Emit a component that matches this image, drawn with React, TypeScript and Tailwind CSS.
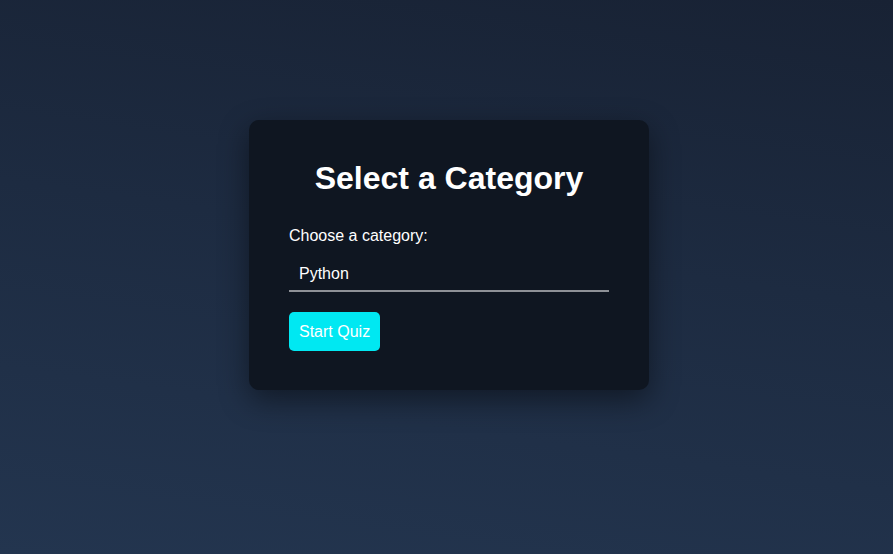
import React, { useState } from 'react';

const categories = ['Python', 'JavaScript', 'HTML', 'CSS'];

const App: React.FC = () => {
  const [category, setCategory] = useState('Python');

  return (
    <div className="min-h-[554px] w-full bg-[linear-gradient(188deg,#182234_0%,#1d2b41_45%,#23354f_100%)] flex justify-center pt-[120px] pl-[5px] font-['Liberation_Sans',Arial,sans-serif]">
      <div className="w-[400px] h-[270px] bg-[#0f1621] rounded-[10px] p-[40px] shadow-[0_10px_30px_rgba(0,0,0,0.45)]">
        <h2 className="text-[32px] leading-[37px] font-bold text-white text-center">Select a Category</h2>
        <label className="block mt-[30px] text-[16px] leading-[18px] text-white">Choose a category:</label>
        <select
          value={category}
          onChange={(e) => setCategory(e.target.value)}
          className="block w-full mt-[10px] pl-[10px] pt-[10px] pb-[7px] text-[16px] leading-[18px] text-white bg-transparent border-b-2 border-[#8e9197] appearance-none outline-none"
        >
          {categories.map((c) => (
            <option key={c} value={c} className="bg-[#0f1621]">
              {c}
            </option>
          ))}
        </select>
        <button className="mt-[20px] h-[39px] px-[10px] bg-[#00e8f2] text-white text-[16px] leading-[18px] rounded-[5px]">
          Start Quiz
        </button>
      </div>
    </div>
  );
};

export default App;
